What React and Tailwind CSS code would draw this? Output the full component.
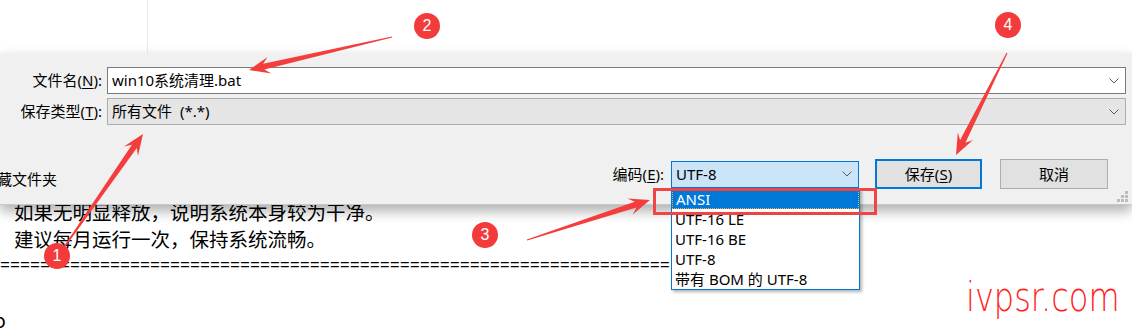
import React from 'react'

function Chevron() {
    return (
        <svg width="10" height="6" viewBox="0 0 10 6" className="flex-shrink-0">
            <path d="M0.5 0.5 L5 5 L9.5 0.5" fill="none" stroke="#5a5a5a" strokeWidth="1" />
        </svg>
    )
}

// tapered red annotation arrow, from tail point to tip point
function Arrow({ from, to, head = 21, barb = 8.5, neck = 3, tail = 0.6 }) {
    const [x0, y0] = from
    const [x1, y1] = to
    const len = Math.hypot(x1 - x0, y1 - y0)
    const ux = (x1 - x0) / len
    const uy = (y1 - y0) / len
    const nx = -uy
    const ny = ux
    const nk = [x1 - ux * head * 0.72, y1 - uy * head * 0.72]
    const bb = [x1 - ux * head, y1 - uy * head]
    const p = (x, y) => `${x.toFixed(1)},${y.toFixed(1)}`
    const pts = [
        p(x0 + nx * tail, y0 + ny * tail),
        p(nk[0] + nx * neck, nk[1] + ny * neck),
        p(bb[0] + nx * barb, bb[1] + ny * barb),
        p(x1, y1),
        p(bb[0] - nx * barb, bb[1] - ny * barb),
        p(nk[0] - nx * neck, nk[1] - ny * neck),
        p(x0 - nx * tail, y0 - ny * tail),
    ].join(' ')
    return <polygon points={pts} fill="#f43d3d" />
}

function Badge({ n, className }) {
    return (
        <div className={`absolute z-30 w-[26px] h-[26px] rounded-full bg-[#f33b3b] text-white flex items-center justify-center text-[16px] leading-none font-['Liberation_Sans',sans-serif] ${className}`}>
            {n}
        </div>
    )
}

const encodings = ['ANSI', 'UTF-16 LE', 'UTF-16 BE', 'UTF-8', '带有 BOM 的 UTF-8']

export default function App() {
    return (
        <div className="relative w-[1132px] h-[329px] overflow-hidden bg-white text-black font-['Noto_Sans','Noto_Sans_CJK_SC',sans-serif]">
            {/* window area above the dialog */}
            <div className="h-[53px] flex">
                <div className="ml-[147px] w-px bg-[#ececec]" />
            </div>

            {/* save dialog bottom panel */}
            <div className="relative z-10 h-[152px] bg-[#f0f0f0] border-b border-[#c8c8c8] shadow-[0_6px_12px_rgba(0,0,0,0.32)] pt-[14px] pr-[6px] text-[15px]">
                <div className="grid grid-cols-[102px_1fr] gap-x-[5px] gap-y-[4px] items-center">
                    <label className="text-right">文件名(<span className="underline underline-offset-2">N</span>):</label>
                    <div className="h-[27px] bg-white border border-[#7a7a7a] flex items-center pl-[4px] pr-[6px]">
                        <span className="flex-1">win10系统清理.bat</span>
                        <Chevron />
                    </div>
                    <label className="text-right">保存类型(<span className="underline underline-offset-2">T</span>):</label>
                    <div className="h-[27px] bg-[#e5e5e5] border border-[#adadad] flex items-center pl-[4px] pr-[6px]">
                        <span className="flex-1">所有文件<span className="ml-[8px]">(*.*)</span></span>
                        <Chevron />
                    </div>
                </div>

                <div className="mt-[34px] mr-[18px] h-[30px] flex items-center">
                    <span className="-ml-[18px] self-end leading-[20px]">隐藏文件夹</span>
                    <span className="ml-auto">编码(<span className="underline underline-offset-2">E</span>):</span>
                    <div className="ml-[7px] w-[188px] h-[27px] bg-[#cce4f7] border border-[#0078d7] flex items-center pl-[4px] pr-[6px]">
                        <span className="flex-1">UTF-8</span>
                        <Chevron />
                    </div>
                    <button className="ml-[16px] w-[107px] h-[30px] border-2 border-[#0078d7] bg-[#e1e1e1]">
                        保存(<span className="underline underline-offset-2">S</span>)
                    </button>
                    <button className="ml-[18px] w-[108px] h-[30px] border border-[#adadad] bg-[#e1e1e1]">取消</button>
                </div>

                {/* resize grip */}
                <svg width="12" height="12" viewBox="0 0 12 12" className="absolute right-[3px] bottom-[1px]">
                    <g fill="#bcbcbc">
                        <rect x="8" y="0" width="3" height="3" />
                        <rect x="4" y="4" width="3" height="3" />
                        <rect x="8" y="4" width="3" height="3" />
                        <rect x="0" y="8" width="3" height="3" />
                        <rect x="4" y="8" width="3" height="3" />
                        <rect x="8" y="8" width="3" height="3" />
                    </g>
                </svg>
            </div>

            {/* document text behind the dialog */}
            <div className="-mt-[7px] text-[19.5px] leading-[27px] font-['Noto_Sans_CJK_SC',sans-serif]">
                <p className="pl-[14px] whitespace-nowrap">如果无明显释放，说明系统本身较为干净。</p>
                <p className="pl-[14px] whitespace-nowrap">建议每月运行一次，保持系统流畅。</p>
                <p className="whitespace-nowrap font-['Liberation_Mono',monospace] text-[16.67px]">
                    {'='.repeat(67)}
                </p>
                <p>&nbsp;</p>
                <p className="-ml-[6px]">o</p>
            </div>

            {/* encoding dropdown list */}
            <div className="absolute z-20 left-[671px] top-[188px] w-[189px] bg-white border border-[#0078d7] shadow-[2px_2px_3px_rgba(0,0,0,0.3)] text-[15px]">
                {encodings.map((e, i) => (
                    <div
                        key={e}
                        className={`h-[20px] flex items-center pl-[3px] leading-none ${i === 0 ? 'bg-[#0078d7] text-white border border-dotted border-[#f0b040]' : ''}`}
                    >
                        {e}
                    </div>
                ))}
            </div>

            {/* highlight frame around ANSI */}
            <div className="absolute z-30 left-[653px] top-[188px] w-[224px] h-[27px] border-[3px] border-[#f04545]" />

            {/* annotation arrows */}
            <svg className="absolute inset-0 z-30 pointer-events-none" width="1132" height="329">
                <Arrow from={[392, 37]} to={[249, 70]} />
                <Arrow from={[58, 256]} to={[143, 134]} />
                <Arrow from={[527, 240]} to={[650, 200]} />
                <Arrow from={[1007, 53]} to={[956, 155]} />
            </svg>

            <Badge n="2" className="left-[414px] top-[13px]" />
            <Badge n="4" className="left-[995px] top-[12px]" />
            <Badge n="3" className="left-[472px] top-[222px]" />
            <Badge n="1" className="left-[44px] top-[243px]" />

            {/* watermark */}
            <div className="absolute z-30 left-[966px] top-[277px] text-[32px] leading-none text-[#ff1f1f] font-['DejaVu_Sans',sans-serif] font-extralight scale-y-125 origin-top">
                ivpsr.com
            </div>
        </div>
    )
}
